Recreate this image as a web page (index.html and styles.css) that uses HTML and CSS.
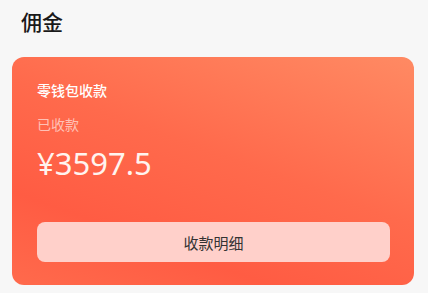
FILE: index.html
```html
<!DOCTYPE html>
<html lang="zh">
<head>
<meta charset="utf-8">
<link rel="stylesheet" href="styles.css">
</head>
<body>
<div class="page">
  <h1 class="title">佣金</h1>
  <div class="card">
    <div class="card-label">零钱包收款</div>
    <div class="card-sub">已收款</div>
    <div class="card-amount">¥3597.5</div>
    <div class="card-btn">收款明细</div>
  </div>
</div>
</body>
</html>
```
FILE: styles.css
```css
html, body {
  margin: 0;
  padding: 0;
  background: #f7f7f7;
  font-family: "Noto Sans CJK SC", "Noto Sans", sans-serif;
}
.page {
  width: 428px;
  height: 293px;
  padding: 0 14px 0 12px;
  box-sizing: border-box;
  overflow: hidden;
}
.title {
  margin: 0;
  padding: 6px 0 0 9px;
  height: 57px;
  box-sizing: border-box;
  font-size: 21px;
  line-height: 30px;
  font-weight: 500;
  color: #1a1a1a;
}
.card {
  height: 228px;
  border-radius: 12px;
  background: linear-gradient(200deg, #ff8a63 0%, #ff6a4c 45%, #ff5c43 75%, #ff6a4c 100%);
  padding: 23px 24px 0 25px;
  box-sizing: border-box;
  display: flex;
  flex-direction: column;
}
.card-label {
  font-size: 14px;
  line-height: 20px;
  font-weight: 500;
  color: #ffffff;
}
.card-sub {
  margin-top: 14px;
  font-size: 14px;
  line-height: 20px;
  color: rgba(255, 255, 255, 0.6);
}
.card-amount {
  margin-top: 11px;
  font-family: "Noto Sans", sans-serif;
  font-size: 31px;
  line-height: 36px;
  font-weight: 400;
  color: #fff4ef;
}
.card-btn {
  margin-top: 41px;
  height: 40px;
  border-radius: 8px;
  background: #ffd0ca;
  display: flex;
  align-items: center;
  justify-content: center;
  font-size: 15px;
  font-weight: 400;
  color: #333333;
}
```
